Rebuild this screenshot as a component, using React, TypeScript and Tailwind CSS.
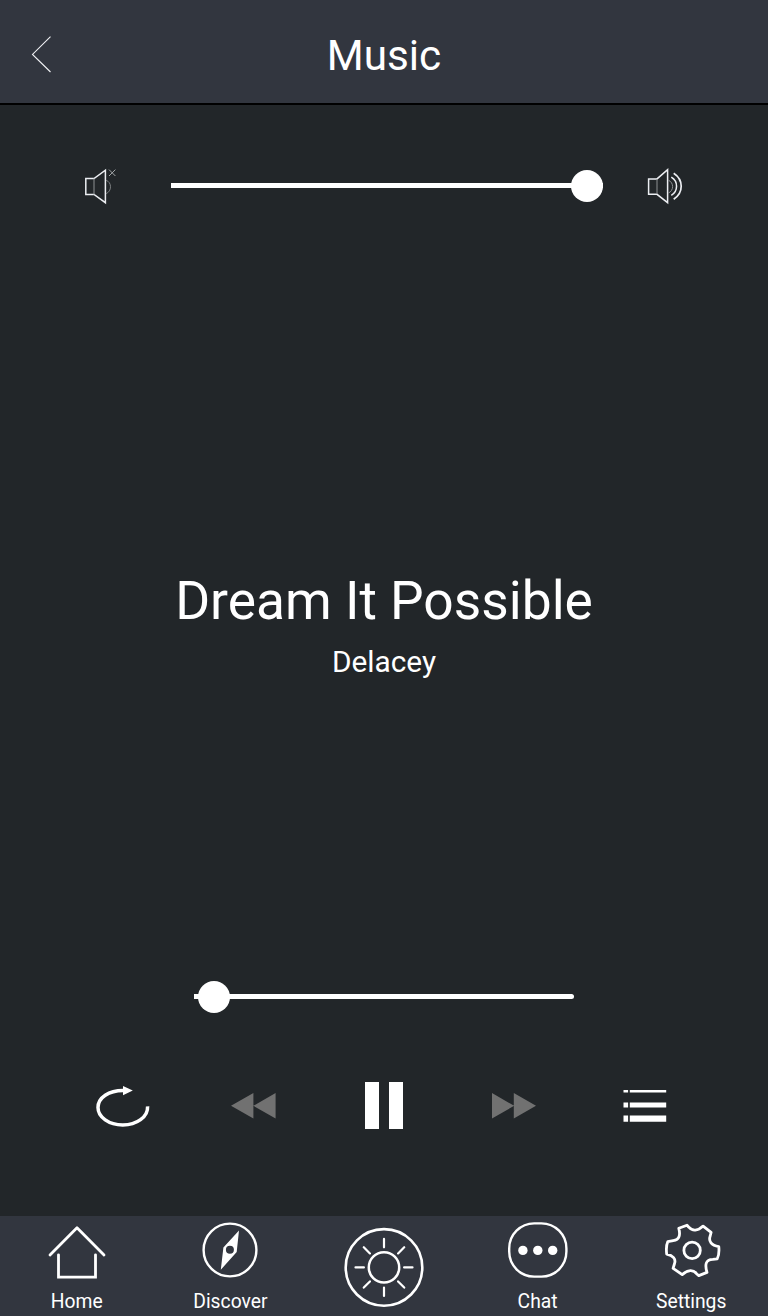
import { ReactElement, ReactNode } from "react";

interface NavItemProps {
  label?: string;
  children: ReactNode;
}

interface SliderProps {
  value: number;
  label: string;
  className: string;
}

const BackIcon = (): ReactElement => (
  <svg width="24" height="40" fill="none" stroke="#f1f2f5" strokeWidth="1.1">
    <path d="M20.5 1.6 2.5 19.4l18 17.6" />
  </svg>
);

const MuteIcon = (): ReactElement => (
  <svg width="40" height="40" fill="none" stroke="#eceef2" strokeWidth="1.5">
    <path d="M14 12.5H5.8v16H14l11.4 8.2V4.2L14 12.5Z" />
    <path d="M14 12.5v16" stroke="#8d9093" strokeWidth="1" />
    <path d="M26 14.3c6 1.8 6 11 0 13.4" stroke="#7b7e80" strokeWidth="1" />
    <path d="m29 3.6 6.4 6.4m0-6.4L29 10" stroke="#a3a6a8" strokeWidth="1" />
  </svg>
);

const VolumeIcon = (): ReactElement => (
  <svg width="42" height="40" fill="none" stroke="#eceef2" strokeWidth="1.5">
    <path d="M13 12.9H4.6v15.4H13l10.6 8.4V3.6L13 12.9Z" />
    <path d="M13 13v15" stroke="#8d9093" strokeWidth="1" />
    <path d="M24.4 14.2c5.6 2.4 5.6 10.4 0 12.8" stroke="#8d9093" strokeWidth="1" />
    <path d="M27.3 11.2c7 4.2 7 14 0 18.2" strokeWidth="1.5" />
    <path d="M29.7 7.3c10 6.6 10 19.4 0 26" strokeWidth="1.7" />
  </svg>
);

const RepeatIcon = (): ReactElement => (
  <svg width="56" height="42" fill="none" stroke="#fff" strokeWidth="3.5">
    <path d="M52.6 20.3C53.2 31 41.5 39 27.8 39 14 39 3 31.2 3 21.5 3 11.5 14 4.4 28 4.4" />
    <path d="m28 0 9.8 4.6L28 9.3Z" fill="#fff" stroke="none" />
  </svg>
);

const RewindIcon = (): ReactElement => (
  <svg width="46" height="26" fill="#717171">
    <path d="M22.4 0v25.6L0 12.8ZM44.6 0v25.6L22.4 12.8Z" />
  </svg>
);

const ForwardIcon = (): ReactElement => (
  <svg width="46" height="26" fill="#717171">
    <path d="M1 0v25.6l22.2-12.8ZM22.8 0v25.6L45 12.8Z" />
  </svg>
);

const ListIcon = (): ReactElement => (
  <svg width="44" height="34" fill="#fff">
    <path d="M.5 1h4.6v2.6H.5ZM6.8 1h36.4v2.6H6.8ZM.5 13.5h4.6v5H.5ZM6.8 13.5h36.4v5H6.8ZM.5 26.6h4.6v6.2H.5ZM6.8 26.6h36.4v6.2H6.8Z" />
  </svg>
);

const HomeIcon = (): ReactElement => (
  <svg width="60" height="60" fill="none" stroke="#fff" strokeWidth="2.8" strokeLinecap="round" strokeLinejoin="round">
    <path d="M3 35 30 7.8 57 35" />
    <path d="M11.5 34.8v22.4h37V34.8" strokeLinejoin="miter" />
  </svg>
);

const CompassIcon = (): ReactElement => (
  <svg width="60" height="60">
    <circle cx="30" cy="30" r="26.4" fill="none" stroke="#fff" strokeWidth="2.4" />
    <path
      fill="#fff"
      fillRule="evenodd"
      d="M39 10.6 36.7 32 20.8 49.8 23.4 27.6ZM29.9 25.8a4 4 0 1 0 0 8 4 4 0 1 0 0-8Z"
    />
  </svg>
);

const SunIcon = (): ReactElement => (
  <svg width="82" height="82" fill="none" stroke="#fff" strokeWidth="2.5" strokeLinecap="round">
    <circle cx="41" cy="41.4" r="38.3" strokeWidth="2.6" />
    <circle cx="41" cy="41.4" r="15.2" />
    <path
      d="M41 12.9v8.4M41 61.5v8.4M12.5 41.4h8.4M61.1 41.4h8.4M20.8 21.2l6.1 6.2M55.1 55.4l6.1 6.2M20.8 61.6l6.1-6.2M55.1 27.4l6.1-6.2"
      strokeWidth="2.2"
    />
  </svg>
);

const ChatIcon = (): ReactElement => (
  <svg width="62" height="60" fill="#fff">
    <rect x="2.2" y="3.4" width="57.2" height="53.2" rx="25" fill="none" stroke="#fff" strokeWidth="2.4" />
    <circle cx="15.9" cy="30.4" r="4.7" />
    <circle cx="30.8" cy="30.4" r="4.7" />
    <circle cx="45.7" cy="30.4" r="4.7" />
  </svg>
);

const GearIcon = (): ReactElement => (
  <svg width="60" height="60" viewBox="-0.8 0 60 60" fill="none" stroke="#fff" strokeWidth="2.8" strokeLinejoin="round">
    <circle cx="30.3" cy="30.4" r="8.2" />
    <path d="M25.2 5.2 17 8.3C18.6 14.3 18 20 11.4 20.6L6 21.6C4.4 25 4.4 30 4.9 34.2 11 35.4 14.6 38.8 12.6 44L11.3 48.3 20.4 54.6C26 49.6 31.6 49 35 54L37 55.6 45.2 52.4C43 45 43.6 39.4 51 39.4L55.4 38.8C57.2 35.5 57.4 31 57 26.6 49.6 25.2 46.4 21.4 48.4 16L49.3 12.4 41.3 6.1C36 11.2 30.5 11.4 27 7.2Z" />
  </svg>
);

const Slider = ({ value, label, className }: SliderProps): ReactElement => (
  <div
    className={`relative h-[5px] bg-white ${className}`}
    role="slider"
    aria-label={label}
    aria-valuenow={value}
  >
    <div
      className="absolute top-[3px] size-8 -translate-x-1/2 -translate-y-1/2 rounded-full bg-white"
      style={{ left: `${value}%` }}
    />
  </div>
);

const NavItem = ({ label, children }: NavItemProps): ReactElement => (
  <button className="flex flex-col items-center">
    {children}
    {label && <span className="mt-2.5 text-[19.3px] leading-6">{label}</span>}
  </button>
);

const App = (): ReactElement => {
  return (
    <div className="flex h-[1316px] w-full flex-col bg-[#222629] font-['Roboto',sans-serif] text-white">
      <header className="grid h-[105px] grid-cols-3 items-center border-b-2 border-black bg-[#32363f] px-[30px] pt-1.5">
        <button aria-label="Back" className="justify-self-start">
          <BackIcon />
        </button>
        <h1 className="pt-1 text-center text-[42.3px] leading-none">Music</h1>
      </header>

      <main className="flex flex-1 flex-col items-center">
        <div className="mt-[61px] flex h-10 w-full items-center justify-between pr-[82px] pl-[80px]">
          <MuteIcon />
          <Slider value={96.2} label="Volume" className="-mt-px ml-2.5 w-[432px]" />
          <VolumeIcon />
        </div>

        <div className="mt-[363px] flex flex-col items-center">
          <h2 className="text-[53.3px] leading-[64px]">Dream It Possible</h2>
          <p className="mt-[11px] text-[29.8px] leading-9">Delacey</p>
        </div>

        <Slider
          value={5.2}
          label="Track position"
          className="mt-[314px] w-[380px] rounded-r-sm"
        />

        <div className="mt-[83px] grid h-12 w-[652px] grid-cols-5 place-items-center">
          <button aria-label="Repeat" className="pt-0.5">
            <RepeatIcon />
          </button>
          <button aria-label="Previous">
            <RewindIcon />
          </button>
          <button aria-label="Pause" className="-mt-0.5 flex gap-2.5">
            <span className="h-[47px] w-3.5 bg-white" />
            <span className="h-[47px] w-3.5 bg-white" />
          </button>
          <button aria-label="Next">
            <ForwardIcon />
          </button>
          <button aria-label="Playlist">
            <ListIcon />
          </button>
        </div>
      </main>

      <nav className="grid h-[100px] grid-cols-5 items-start justify-items-center bg-[#32363f] pt-1">
        <NavItem label="Home">
          <HomeIcon />
        </NavItem>
        <NavItem label="Discover">
          <CompassIcon />
        </NavItem>
        <div className="pt-1.5">
          <NavItem>
            <SunIcon />
          </NavItem>
        </div>
        <NavItem label="Chat">
          <ChatIcon />
        </NavItem>
        <NavItem label="Settings">
          <GearIcon />
        </NavItem>
      </nav>
    </div>
  );
};

export default App;
